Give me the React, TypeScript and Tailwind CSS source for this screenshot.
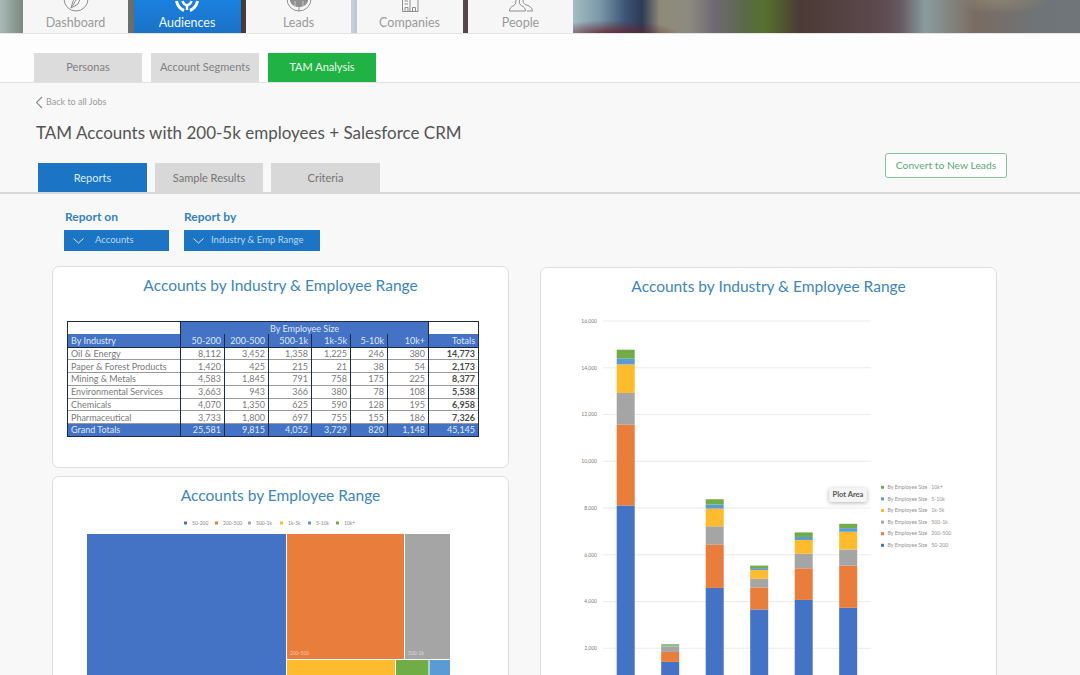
const navBg =
  "bg-[radial-gradient(70px_16px_at_612px_36px,#66202a,transparent),radial-gradient(50px_14px_at_1000px_0px,#8a8270,transparent),linear-gradient(90deg,#a9bab6_0px,#7c8a80_22px,#6b6f68_130px,#3d3a3e_240px,#4a3c3e_246px,#c9d0dc_352px,#bcc4d0_357px,#55474e_464px,#4f474c_468px,#a5bcc2_573px,#7a98a8_600px,#3d5578_625px,#2c3a55_642px,#8f8b78_660px,#8b8a80_690px,#6e6874_715px,#5c6a48_745px,#56702e_765px,#4c3a34_800px,#5c4a50_880px,#65585e_900px,#8a9c9e_925px,#7a6c62_975px,#6f7478_1040px,#70757a_1080px)]";

const tableRows = [
  ["Oil & Energy", "8,112", "3,452", "1,358", "1,225", "246", "380", "14,773"],
  ["Paper & Forest Products", "1,420", "425", "215", "21", "38", "54", "2,173"],
  ["Mining & Metals", "4,583", "1,845", "791", "758", "175", "225", "8,377"],
  ["Environmental Services", "3,663", "943", "366", "380", "78", "108", "5,538"],
  ["Chemicals", "4,070", "1,350", "625", "590", "128", "195", "6,958"],
  ["Pharmaceutical", "3,733", "1,800", "697", "755", "155", "186", "7,326"],
];
const headRow = ["By Industry", "50-200", "200-500", "500-1k", "1k-5k", "5-10k", "10k+", "Totals"];
const footRow = ["Grand Totals", "25,581", "9,815", "4,052", "3,729", "820", "1,148", "45,145"];

const colors = ["#4472c4", "#e97d3b", "#a5a5a5", "#fdbb2d", "#5b9bd5", "#70ad47"];
const sizes = ["50-200", "200-500", "500-1k", "1k-5k", "5-10k", "10k+"];
const barData = [
  [8112, 3452, 1358, 1225, 246, 380],
  [1420, 425, 215, 21, 38, 54],
  [4583, 1845, 791, 758, 175, 225],
  [3663, 943, 366, 380, 78, 108],
  [4070, 1350, 625, 590, 128, 195],
  [3733, 1800, 697, 755, 155, 186],
];

const yOf = (v: number) => 321 + (16000 - v) * 0.02338;

function DashboardIcon() {
  return (
    <svg width="26" height="26" viewBox="0 0 26 26" fill="none" stroke="#8f8f8f" strokeWidth="1" className="shrink-0">
      <circle cx="13" cy="13" r="12" />
      <path d="M21 3 L15 18 L8 22 L10 15 Z M8 22 L15 11" />
    </svg>
  );
}

function AudiencesIcon() {
  return (
    <svg width="26" height="26" viewBox="0 0 26 26" fill="none" stroke="#fff" className="shrink-0">
      <path d="M2.5 15 Q4 22 10 24.5" strokeWidth="3" />
      <path d="M23.5 15 Q22 22 16 24.5" strokeWidth="3" />
      <path d="M8.5 15 Q9.5 18.5 13 19.5 Q16.5 18.5 17.5 15 M13 19 V24" strokeWidth="2.4" />
    </svg>
  );
}

function LeadsIcon() {
  return (
    <svg width="26" height="26" viewBox="0 0 26 26" fill="none" stroke="#8f8f8f" strokeWidth="1" className="shrink-0">
      <circle cx="13" cy="13" r="12" />
      <path d="M4 13 H22 V15 Q20 21 13 21 Q6 21 4 15 Z" fill="#8f8f8f" stroke="none" />
      <path d="M9 15 V21 M17 15 V21" stroke="#d8d8d8" strokeWidth="0.8" />
      <path d="M13 21 V25" />
    </svg>
  );
}

function CompaniesIcon() {
  return (
    <svg width="18" height="26" viewBox="0 0 18 26" fill="none" stroke="#8f8f8f" strokeWidth="1" className="shrink-0">
      <path d="M1.5 25.5 V1 H9 V25.5 M9 8 H17 V25.5 H1.5" />
      <path d="M3.5 15 H7 M3.5 18 H7" />
      <path d="M4 25 V21.5 H7 V25 M11.5 25 V21.5 H14.5 V25" />
    </svg>
  );
}

function PeopleIcon() {
  return (
    <svg width="26" height="26" viewBox="0 0 26 26" fill="none" stroke="#8f8f8f" strokeWidth="1" className="shrink-0">
      <path d="M8 13 Q8.5 18 6 19.5 Q1.5 21 1.5 25 H17.5 Q17.5 21 13 19.5 Q10.5 18 11.5 13" />
      <path d="M15 13 Q14.5 17 17 18.5 Q24 20 24.5 25 H19" />
    </svg>
  );
}

function NavTab({ label, icon, width, active }: { label: string; icon: React.ReactNode; width: string; active?: boolean }) {
  return (
    <div
      className={
        "h-[33px] flex flex-col items-center justify-end overflow-hidden pb-[3px] " + width + " " +
        (active ? "bg-[linear-gradient(180deg,#1a80de,#1b72c6)] text-[#eef6ff]" : "bg-[#f6f6f6] text-[#9a9a9a]")
      }
    >
      {icon}
      <span className="mt-[3px] text-[12.5px] leading-[15px]">{label}</span>
    </div>
  );
}

function SubTab({ label, green }: { label: string; green?: boolean }) {
  return (
    <div
      className={
        "w-[108px] h-[29px] flex items-center justify-center text-[11px] " +
        (green ? "bg-[#20b245] text-[#eafbe9]" : "bg-[#dcdcdc] text-[#808080]")
      }
    >
      {label}
    </div>
  );
}

function ReportTab({ label, active, width }: { label: string; active?: boolean; width: string }) {
  return (
    <div
      className={
        "h-[29px] pt-[1px] flex items-center justify-center text-[11px] " + width + " " +
        (active ? "bg-[#1b75c4] text-[#d9ecfb]" : "bg-[#d8d8d8] text-[#747474]")
      }
    >
      {label}
    </div>
  );
}

function Dropdown({ label, title, width, gap, titlePad }: { label: string; title: string; width: string; gap: string; titlePad?: string }) {
  return (
    <div>
      <div className={"text-[12px] leading-[15px] font-bold text-[#3583be] " + (titlePad ?? "")}>{title}</div>
      <div className={"mt-[6px] h-[21px] flex items-center pl-[9px] bg-[#1b75c4] text-[9.5px] text-[#b9d8f2] " + width}>
        <svg width="11" height="6" viewBox="0 0 11 6" fill="none" stroke="#cfe5f7" strokeWidth="1">
          <path d="M0.5 0.5 L5.5 5 L10.5 0.5" />
        </svg>
        <span className={gap}>{label}</span>
      </div>
    </div>
  );
}

function Title({ text }: { text: string }) {
  return <div className="pt-[8px] text-center text-[15.5px] leading-[20px] text-[#3d85ba]">{text}</div>;
}

function DataTable() {
  const cell = "border-x border-x-[#1c2a44] px-[3px] h-[12.75px] leading-none";
  return (
    <table className="mt-[26px] ml-[14px] w-[411px] table-fixed border-collapse border border-[#1c2a44] text-[9px]">
      <colgroup>
        <col className="w-[113px]" />
        <col className="w-[44px]" />
        <col className="w-[44px]" />
        <col className="w-[43px]" />
        <col className="w-[39px]" />
        <col className="w-[37px]" />
        <col className="w-[41px]" />
        <col className="w-[50px]" />
      </colgroup>
      <tbody>
        <tr>
          <td className={cell + " bg-white"} />
          <td colSpan={6} className={cell + " bg-[#4472c4] text-center text-[#dfe8f8]"}>By Employee Size</td>
          <td className={cell + " bg-white"} />
        </tr>
        <tr className="bg-[#4472c4] text-[#dfe8f8] border-b border-b-[#1c2a44]">
          {headRow.map((h, i) => (
            <td key={h} className={cell + (i === 0 ? " text-left" : " text-right")}>{h}</td>
          ))}
        </tr>
        {tableRows.map((row) => (
          <tr key={row[0]} className="border-b border-b-[#9a9a9a] text-[#7a7a7a]">
            {row.map((v, i) => (
              <td key={i} className={cell + (i === 0 ? " text-left" : " text-right") + (i === 7 ? " font-bold text-[#4a4a4a]" : "")}>{v}</td>
            ))}
          </tr>
        ))}
        <tr className="bg-[#4472c4] text-[#dfe8f8]">
          {footRow.map((v, i) => (
            <td key={i} className={cell + (i === 0 ? " text-left" : " text-right")}>{v}</td>
          ))}
        </tr>
      </tbody>
    </table>
  );
}

function Treemap() {
  const legendX = [184, 215, 248, 280, 308, 336];
  return (
    <svg viewBox="53 515 455 199" className="block w-[455px] h-[199px] mt-[10px]">
      {sizes.map((s, i) => (
        <g key={s}>
          <rect x={legendX[i]} y={521.5} width="3" height="3" fill={colors[i]} />
          <text x={legendX[i] + 8} y={524.8} fontSize="5" fill="#888">{s}</text>
        </g>
      ))}
      <rect x="87" y="534" width="199" height="180" fill={colors[0]} />
      <rect x="287" y="534" width="117" height="125" fill={colors[1]} />
      <rect x="405" y="534" width="45" height="125" fill={colors[2]} />
      <rect x="287" y="660" width="108" height="54" fill={colors[3]} />
      <rect x="396" y="660" width="32.5" height="54" fill={colors[5]} />
      <rect x="429.5" y="660" width="20.5" height="54" fill={colors[4]} />
      <text x="290" y="655" fontSize="5" fill="#f6c9a8">200-500</text>
      <text x="408" y="655" fontSize="5" fill="#dedede">500-1k</text>
    </svg>
  );
}

function BarChart() {
  const gridVals = [16000, 14000, 12000, 10000, 8000, 6000, 4000, 2000];
  const legend = [...sizes.keys()].reverse();
  return (
    <svg viewBox="541 268 455 420" className="absolute left-0 top-0 w-[455px] h-[420px]">
      {gridVals.map((v) => (
        <g key={v}>
          <line x1="603" x2="871" y1={yOf(v)} y2={yOf(v)} stroke="#e6e6ea" strokeWidth="0.8" />
          <text x="597" y={yOf(v) + 1.8} textAnchor="end" fontSize="5" fill="#7a7a7a">{v.toLocaleString("en-US")}</text>
        </g>
      ))}
      {barData.map((vals, b) => {
        let sum = 0;
        return vals.map((v, i) => {
          const top = yOf(sum + v);
          const bottom = yOf(sum);
          sum += v;
          return <rect key={i} x={616.7 + b * 44.5} y={top} width="18" height={bottom - top} fill={colors[i]} />;
        });
      })}
      {legend.map((i, row) => (
        <g key={i}>
          <rect x="881" y={485.8 + row * 11.6} width="3" height="3" fill={colors[i]} />
          <text x="887.5" y={489 + row * 11.6} fontSize="5.2" fill="#929292">{"By Employee Size\u00a0\u00a0\u00a0" + sizes[i]}</text>
        </g>
      ))}
    </svg>
  );
}

export default function App() {
  return (
    <div className="h-[675px] w-[1080px] overflow-hidden bg-[#f8f8f8] font-['Lato',sans-serif]">
      <div className={"h-[33px] flex gap-[5.5px] pl-[23px] " + navBg}>
        <NavTab label="Dashboard" icon={<DashboardIcon />} width="w-[105px]" />
        <NavTab label="Audiences" icon={<AudiencesIcon />} width="w-[107px]" active />
        <NavTab label="Leads" icon={<LeadsIcon />} width="w-[105px]" />
        <NavTab label="Companies" icon={<CompaniesIcon />} width="w-[106px]" />
        <NavTab label="People" icon={<PeopleIcon />} width="w-[105px]" />
      </div>

      <div className="h-[50px] flex items-end gap-[9px] pl-[34px] bg-[#fdfdfd] border-t border-t-[#e4e4e4] border-b border-b-[#e2e2e2]">
        <SubTab label="Personas" />
        <SubTab label="Account Segments" />
        <SubTab label="TAM Analysis" green />
      </div>

      <div className="h-[111px] border-b-2 border-b-[#d8d8d8]">
        <div className="pt-[12px] pl-[35px] flex items-center gap-[3px] text-[9px] leading-[14px] text-[#9c9c9c]">
          <svg width="8" height="13" viewBox="0 0 8 13" fill="none" stroke="#8a8a8a" strokeWidth="1.1">
            <path d="M7 1 L1.5 6.5 L7 12" />
          </svg>
          Back to all Jobs
        </div>
        <div className="mt-[12px] pl-[36px] text-[17px] leading-[24px] text-[#545454]">
          TAM Accounts with 200-5k employees + Salesforce CRM
        </div>
        <div className="flex items-end justify-between mt-[8px] pl-[38px] pr-[73px]">
          <div className="flex gap-[8px]">
            <ReportTab label="Reports" width="w-[109px]" active />
            <ReportTab label="Sample Results" width="w-[108px]" />
            <ReportTab label="Criteria" width="w-[109px]" />
          </div>
          <div className="w-[122px] h-[25px] mb-[14px] flex items-center justify-center rounded-[3px] border border-[#82c596] bg-white text-[10.3px] text-[#5aa873]">
            Convert to New Leads
          </div>
        </div>
      </div>

      <div className="flex gap-[15px] pl-[64px] pt-[15px]">
        <Dropdown title="Report on" label="Accounts" width="w-[105px]" gap="ml-[11px]" titlePad="pl-[1px]" />
        <Dropdown title="Report by" label="Industry & Emp Range" width="w-[136px]" gap="ml-[7px]" />
      </div>

      <div className="flex gap-[31px] pl-[52px] mt-[15px]">
        <div className="w-[457px] flex flex-col gap-[8px]">
          <div className="h-[202px] rounded-[7px] border border-[#dedede] bg-white">
            <Title text="Accounts by Industry & Employee Range" />
            <DataTable />
          </div>
          <div className="h-[300px] rounded-[7px] border border-[#dedede] bg-white">
            <Title text="Accounts by Employee Range" />
            <Treemap />
          </div>
        </div>
        <div className="w-[457px] h-[500px] mt-[1px] relative rounded-[7px] border border-[#dedede] bg-white">
          <BarChart />
          <div className="relative">
            <Title text="Accounts by Industry & Employee Range" />
          </div>
          <div className="absolute left-[288px] top-[220px] w-[38px] h-[14px] flex items-center justify-center rounded-[2px] bg-[#f4f4f4] text-[7.5px] font-bold text-[#555] shadow-[0_1px_4px_rgba(0,0,0,0.3)]">
            Plot Area
          </div>
        </div>
      </div>
    </div>
  );
}
